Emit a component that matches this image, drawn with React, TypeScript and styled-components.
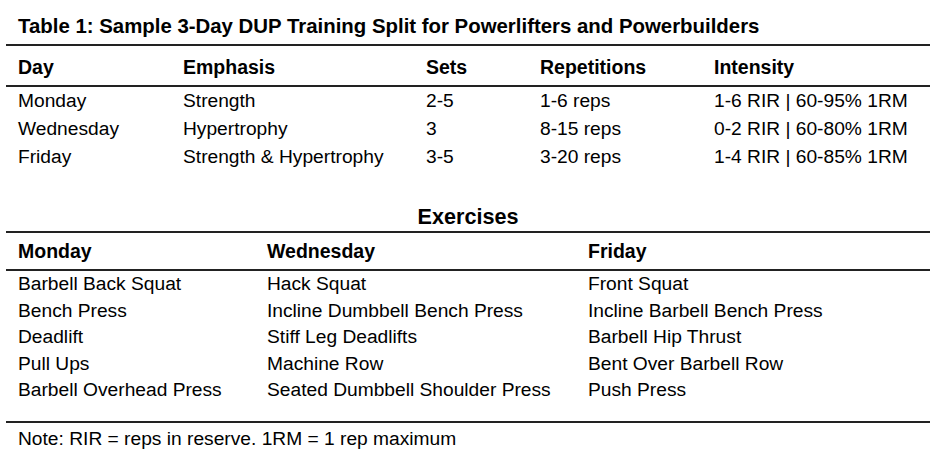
import React from "react";
import styled, { createGlobalStyle } from "styled-components";

const Global = createGlobalStyle`
  html, body { margin: 0; padding: 0; background: #fff; }
  body { font-family: "Liberation Sans", Arial, sans-serif; color: #000; }
`;

const Page = styled.div`
  width: 924px;
  padding: 0 0 0 6px;
  display: flex;
  flex-direction: column;
`;

const Title = styled.div`
  height: 46px;
  box-sizing: border-box;
  padding: 13px 0 0 12px;
  font-size: 20.4px;
  font-weight: 700;
  line-height: 26px;
  border-bottom: 2px solid #222;
`;

const Grid = styled.div<{ $cols: string }>`
  display: grid;
  grid-template-columns: ${(p) => p.$cols};
`;

const HeadCell = styled.div<{ $h: number; $pt?: number }>`
  height: ${(p) => p.$h}px;
  display: flex;
  align-items: center;
  padding-left: 12px;
  padding-top: ${(p) => p.$pt ?? 0}px;
  font-size: 19.5px;
  font-weight: 700;
  border-bottom: 2px solid #222;
  box-sizing: border-box;
`;

const Cell = styled.div<{ $h: number }>`
  height: ${(p) => p.$h}px;
  display: flex;
  align-items: center;
  padding-left: 12px;
  font-size: 19.2px;
  white-space: nowrap;
`;

const Spacer = styled.div<{ $h: number }>`
  height: ${(p) => p.$h}px;
`;

const SectionTitle = styled.div`
  height: 46px;
  box-sizing: border-box;
  display: flex;
  align-items: center;
  justify-content: center;
  padding-top: 15px;
  font-size: 21.6px;
  font-weight: 700;
  border-bottom: 2px solid #222;
`;

const Footer = styled.div`
  border-top: 2px solid #222;
  height: 32px;
  display: flex;
  align-items: center;
  padding-left: 12px;
  font-size: 19.2px;
`;

const splitRows = [
  ["Monday", "Strength", "2-5", "1-6 reps", "1-6 RIR | 60-95% 1RM"],
  ["Wednesday", "Hypertrophy", "3", "8-15 reps", "0-2 RIR | 60-80% 1RM"],
  ["Friday", "Strength & Hypertrophy", "3-5", "3-20 reps", "1-4 RIR | 60-85% 1RM"],
];

const exercises = [
  ["Barbell Back Squat", "Hack Squat", "Front Squat"],
  ["Bench Press", "Incline Dumbbell Bench Press", "Incline Barbell Bench Press"],
  ["Deadlift", "Stiff Leg Deadlifts", "Barbell Hip Thrust"],
  ["Pull Ups", "Machine Row", "Bent Over Barbell Row"],
  ["Barbell Overhead Press", "Seated Dumbbell Shoulder Press", "Push Press"],
];

export default function App() {
  return (
    <>
      <Global />
      <Page>
        <Title>Table 1: Sample 3-Day DUP Training Split for Powerlifters and Powerbuilders</Title>
        <Grid $cols="165px 243px 114px 174px 228px">
          {["Day", "Emphasis", "Sets", "Repetitions", "Intensity"].map((h) => (
            <HeadCell key={h} $h={41} $pt={3}>{h}</HeadCell>
          ))}
          {splitRows.map((r) =>
            r.map((c, i) => (
              <Cell key={r[0] + i} $h={28}>{c}</Cell>
            ))
          )}
        </Grid>
        <Spacer $h={16} />
        <SectionTitle>Exercises</SectionTitle>
        <Grid $cols="249px 321px 354px">
          {["Monday", "Wednesday", "Friday"].map((h) => (
            <HeadCell key={h} $h={38}>{h}</HeadCell>
          ))}
          {exercises.map((r) =>
            r.map((c, i) => (
              <Cell key={r[0] + i} $h={26.5}>{c}</Cell>
            ))
          )}
        </Grid>
        <Spacer $h={17} />
        <Footer>Note: RIR = reps in reserve. 1RM = 1 rep maximum</Footer>
      </Page>
    </>
  );
}
